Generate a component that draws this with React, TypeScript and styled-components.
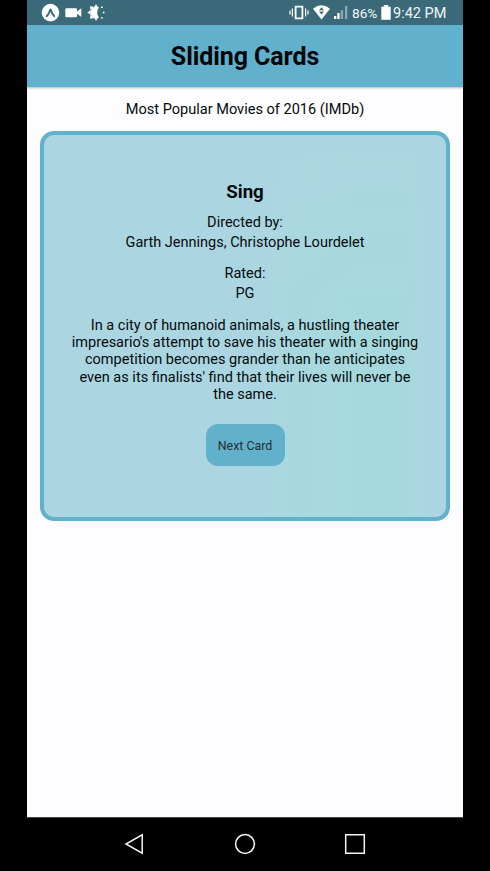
import React from "react";
import styled, { createGlobalStyle } from "styled-components";

const GlobalStyle = createGlobalStyle`
  *, *::before, *::after { box-sizing: border-box; }
  body { margin: 0; background: #000; overflow: hidden; }
`;

const Device = styled.div`
  display: flex;
  flex-direction: column;
  width: 490px;
  height: 871px;
  padding: 0 27px;
  background: #000;
  color: #050a0c;
  font-family: Roboto, "Liberation Sans", sans-serif;
`;

const StatusBar = styled.div`
  display: flex;
  justify-content: space-between;
  flex: none;
  height: 25px;
  background: #3a6a79;
  color: #f2f7f8;
`;

const StatusIcons = styled.svg`
  display: block;
  height: 25px;
`;

const StatusGroup = styled.div`
  display: flex;
  align-items: center;
  padding-right: 15px;
`;

const StatusText = styled.span<{ $size: number; $width: number }>`
  width: ${(p) => p.$width}px;
  font-size: ${(p) => p.$size}px;
  line-height: 25px;
  padding-top: 1px;
  white-space: nowrap;
`;

const Header = styled.header`
  display: flex;
  align-items: center;
  justify-content: center;
  flex: none;
  height: 61.5px;
  padding-top: 2px;
  background: #61b1cc;
  box-shadow: 0 1px 2px rgba(60, 50, 60, 0.35);
  z-index: 1;
`;

const Title = styled.h1`
  margin: 0;
  font-size: 25px;
  line-height: 30px;
  font-weight: 700;
  letter-spacing: -0.08px;
  color: #020608;
`;

const Screen = styled.main`
  flex: 1;
  display: flex;
  flex-direction: column;
  padding: 0 13px;
  background: #fdfdff;
`;

const Subtitle = styled.p`
  margin: 12.5px 0 0;
  height: 32px;
  font-size: 14.55px;
  line-height: 21px;
  text-align: center;
`;

const Card = styled.section`
  display: flex;
  flex-direction: column;
  align-items: center;
  width: 410px;
  height: 390px;
  padding-top: 45px;
  border: 4px solid #61b1cc;
  border-radius: 14px;
  background:
    linear-gradient(180deg, #abd6e1 0, rgba(171, 214, 225, 0) 45%),
    linear-gradient(90deg, #abd6e1 0 55%, #a8d8df 62%, #a6d9dd 78%, #a6d9dd 90%, #abd6e1 94%);
  text-align: center;
`;

const MovieTitle = styled.h2`
  margin: 0 0 9px;
  font-size: 18.7px;
  line-height: 24px;
  font-weight: 700;
`;

const Detail = styled.p`
  margin: 0 0 12px;
  font-size: 14.5px;
  line-height: 19.7px;
`;

const Synopsis = styled.p`
  margin: 1px 0 21px;
  font-size: 14.52px;
  line-height: 17.25px;
  white-space: nowrap;
`;

const NextButton = styled.button`
  width: 79px;
  height: 42px;
  padding: 1px 0 0;
  border: 0;
  border-radius: 12px;
  background: #61b1cc;
  color: #252e31;
  font: 12.4px Roboto, "Liberation Sans", sans-serif;
`;

const NavBar = styled.nav`
  display: flex;
  align-items: center;
  justify-content: space-between;
  flex: none;
  height: 54px;
  padding: 0 97px 1px;
  border-top: 1px solid #444;
`;

const NavIcon = styled.svg`
  width: 22px;
  height: 22px;
  fill: none;
  stroke: #f4f4f4;
  stroke-width: 1.5;
`;

const synopsis = [
  "In a city of humanoid animals, a hustling theater",
  "impresario's attempt to save his theater with a singing",
  "competition becomes grander than he anticipates",
  "even as its finalists' find that their lives will never be",
  "the same.",
];

function NotificationIcons() {
  return (
    <StatusIcons width="85" viewBox="27 0 85 25" fill="#fff">
      <circle cx="50.5" cy="12.6" r="8.8" />
      <path d="M46.8 16.2Q49.2 13.4 50.5 9.4Q51.8 13.4 54.2 16.2" fill="none" stroke="#3a6a79" strokeWidth="1.9" strokeLinecap="round" strokeLinejoin="round" />
      <path d="M66.3 8.3H76q1 0 1 1V11.5L81.3 8.3V17L77 13.8V16.2q0 1-1 1H66.3q-1 0-1-1V9.3q0-1 1-1Z" />
      <path d="M99 7.2A5.9 5.9 0 1 0 99 17.8Q95.4 12.5 99 7.2Z" />
      <path d="m87.4 12.5 3.4-2.4v4.8zM90 6.3l4 .5-3.4 3.4zM90 18.7l4-.5-3.4-3.4zM96 4.2l1.8 2.6h-3.6zM96 20.8l1.8-2.6h-3.6z" />
      <circle cx="101.9" cy="7.2" r=".9" /><circle cx="103.7" cy="12.5" r=".9" /><circle cx="101.9" cy="17.8" r=".9" />
    </StatusIcons>
  );
}

function SignalIcons() {
  return (
    <StatusIcons width="63" viewBox="289 0 63 25" fill="#fff">
      <path d="M295.6 6.6H302.4V18.4H295.6Z" fill="none" stroke="#fff" strokeWidth="1.8" />
      <path d="M292.4 8.5V16.5M305.6 8.5V16.5M290 10.5V14.5M308 10.5V14.5" stroke="#fff" strokeWidth="1.2" />
      <path d="M313 8.7Q321.5 2 330 8.7L321.5 19.5Z" />
      <path d="m321.5 7.3 2.5 3h-5zM321.5 14.6l2.5-3h-5z" fill="#3a6a79" />
      <path d="M334 16h2.3v3H334zM337.3 13h2.3v6h-2.3z" />
      <path d="M340.8 10.3h2.3V19h-2.3zM345 6h2.3v13H345z" opacity=".42" />
    </StatusIcons>
  );
}

function BatteryIcon() {
  return (
    <StatusIcons width="13" viewBox="380 0 13 25" fill="#fff">
      <path d="M383.8 5h4.4v1.7h2.5v13h-9.4v-13h2.5Z" />
    </StatusIcons>
  );
}

export default function App() {
  return (
    <>
      <GlobalStyle />
      <Device>
        <StatusBar>
          <NotificationIcons />
          <StatusGroup>
            <SignalIcons />
            <StatusText $size={13.6} $width={28}>86%</StatusText>
            <BatteryIcon />
            <StatusText $size={14.5} $width={55}>9:42 PM</StatusText>
          </StatusGroup>
        </StatusBar>
        <Header>
          <Title>Sliding Cards</Title>
        </Header>
        <Screen>
          <Subtitle>Most Popular Movies of 2016 (IMDb)</Subtitle>
          <Card>
            <MovieTitle>Sing</MovieTitle>
            <Detail>Directed by:<br />Garth Jennings, Christophe Lourdelet</Detail>
            <Detail>Rated:<br />PG</Detail>
            <Synopsis>
              {synopsis.map((line) => (
                <React.Fragment key={line}>{line}<br /></React.Fragment>
              ))}
            </Synopsis>
            <NextButton type="button">Next Card</NextButton>
          </Card>
        </Screen>
        <NavBar>
          <NavIcon viewBox="0 0 22 22"><path d="M18.2 1.8V20.2L2 11Z" /></NavIcon>
          <NavIcon viewBox="0 0 22 22"><circle cx="11" cy="11" r="9.4" /></NavIcon>
          <NavIcon viewBox="0 0 22 22"><path d="M1.7 1.7H20.3V20.3H1.7Z" /></NavIcon>
        </NavBar>
      </Device>
    </>
  );
}
